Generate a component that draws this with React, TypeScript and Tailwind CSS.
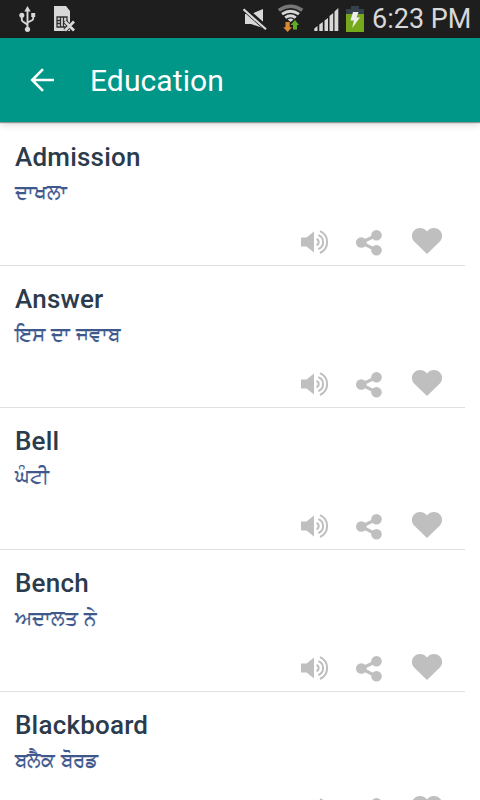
interface Word {
  id: string
  english: string
  punjabi: string
}

const words: Word[] = [
  { id: 'admission', english: 'Admission', punjabi: 'ਦਾਖਲਾ' },
  { id: 'answer', english: 'Answer', punjabi: 'ਇਸ ਦਾ ਜਵਾਬ' },
  { id: 'bell', english: 'Bell', punjabi: 'ਘੰਟੀ' },
  { id: 'bench', english: 'Bench', punjabi: 'ਅਦਾਲਤ ਨੇ' },
  { id: 'blackboard', english: 'Blackboard', punjabi: 'ਬਲੈਕ ਬੋਰਡ' },
]

export default function App() {
  return (
    <div className="flex h-[800px] w-[480px] flex-col overflow-hidden bg-white font-['Roboto','Noto_Sans',sans-serif]">
      <StatusBar />
      <header className="relative z-10 flex h-[84px] shrink-0 items-center bg-[#009688] pl-[30px] text-white shadow-[0_1px_1px_rgba(0,0,0,0.35),0_2px_8px_rgba(0,0,0,0.18)]">
        <svg className="h-6 w-6" viewBox="0 0 24 24" fill="none" stroke="currentColor" strokeWidth="2.6">
          <path d="M24 12H2.5M13 1.2 2.2 12 13 22.8" />
        </svg>
        <h1 className="pt-0.5 pl-9 text-[30px] leading-9 tracking-[0.1px]">Education</h1>
      </header>
      <main className="flex flex-col pt-0.5">
        {words.map((word) => (
          <WordRow key={word.id} word={word} />
        ))}
      </main>
    </div>
  )
}

function StatusBar() {
  return (
    <div className="flex h-[38px] shrink-0 items-center bg-[#1e1e1e] text-[#d8d8d8]">
      {/* USB */}
      <svg className="ml-[19px] h-[38px] w-[18px]" viewBox="0 0 18 38" fill="none" stroke="currentColor" strokeWidth="1.9">
        <path d="M8.5 30V9M2.8 16v4.2c0 2 5.7 3 5.7 5.4M14.2 16v2.7c0 2.4-5.7 2.4-5.7 4.8" />
        <path d="m8.5 6 3.2 5.5H5.3zM12.2 13h4v4h-4z" fill="currentColor" stroke="none" />
        <circle cx="2.8" cy="15.3" r="2.5" fill="currentColor" stroke="none" />
        <circle cx="8.5" cy="29.3" r="2.6" fill="currentColor" stroke="none" />
      </svg>
      {/* No SIM card */}
      <svg className="ml-4 h-[38px] w-[22px]" viewBox="0 0 22 38">
        <path d="M1 6h12l4 5v20H1z" fill="currentColor" />
        <path d="M4 17h10v10H4zM7.5 17v10M10.5 17v10M4 20.5h3.5M4 23.5h3.5M10.5 22H14" fill="none" stroke="#303030" strokeWidth="1.3" />
        <path d="m12 21.5 9 9m0-9-9 9" stroke="#1e1e1e" strokeWidth="4.5" />
        <path d="m12 21.5 9 9m0-9-9 9" stroke="currentColor" strokeWidth="2.8" />
      </svg>
      {/* Muted */}
      <svg className="ml-[168px] h-[38px] w-6" viewBox="0 0 24 38">
        <path d="M2 14h6l12-5v19L8 24H2z" fill="currentColor" />
        <path d="m0 7.5 23.5 21" stroke="#1e1e1e" strokeWidth="5.5" />
        <path d="m.5 9.3 22.5 20" stroke="currentColor" strokeWidth="2.2" />
      </svg>
      {/* Wi-Fi */}
      <svg className="ml-[11px] h-[38px] w-[26px]" viewBox="0 0 26 38" fill="none">
        <path d="M.8 10.3Q12.5 2.2 24.3 10.3" stroke="#777" strokeWidth="3.6" />
        <path d="M4 14.2q8.5-6 17 0M7.2 17.7q5.3-3.8 10.6 0" stroke="currentColor" strokeWidth="2.8" />
        <path d="M9.6 19.4q3-2 6 0L12.6 22z" fill="currentColor" />
        <path d="M7.5 22h4.2v5.2H14L9.6 32l-4.4-4.8h2.3z" fill="#dd8934" />
        <path d="m17 20 4 5h-2v4.5h-4V25h-2.5z" fill="#61aa2a" />
      </svg>
      {/* Signal strength */}
      <svg className="ml-2.5 h-[38px] w-[26px]" viewBox="0 0 26 38" fill="currentColor">
        <path d="M.3 31v-2.5L3.5 26v5zM5.3 31v-6.5L8.8 22v9zM10.5 31V20.5l3.5-2.5v13zM15.5 31V16l3.7-3v18zM20.5 31V11.5L24.3 8v23z" />
      </svg>
      {/* Battery */}
      <svg className="ml-1.5 h-[38px] w-[18px]" viewBox="0 0 18 38">
        <path d="M5 6h8v3h5v6H0V9h5z" fill="#36424b" />
        <path d="M0 14h18v18H0z" fill="#75a91c" />
        <path d="M7 12h5.5l-2 5.5H14L6.2 28l1.7-7.5H4.5z" fill="#eee" />
      </svg>
      <span className="ml-2 text-[27px] leading-[38px]">6:23 PM</span>
    </div>
  )
}

function WordRow({ word }: { word: Word }) {
  return (
    <section className="flex h-[142px] w-[465px] shrink-0 flex-col border-b border-[#dfdfdf] pl-[15px]">
      <h2 className="mt-[17px] text-[26px] leading-8 font-medium tracking-[0.2px] text-[#2b3b4c]">{word.english}</h2>
      <p className="mt-[3px] text-[20px] leading-8 whitespace-nowrap text-[#3e588e] [word-spacing:1px] [-webkit-text-stroke:0.25px_#3e588e]">
        {word.punjabi}
      </p>
      <div className="mt-5 flex items-start pl-[286px] text-[#bfbfbf]">
        {/* Speaker */}
        <svg className="mt-0.5 h-6 w-7" viewBox="0 0 28 24" fill="none" stroke="currentColor" strokeWidth="2">
          <path d="M0 7.5h5.5L13 1.5v21l-7.5-6H0z" fill="currentColor" stroke="none" />
          <path d="M15.5 9a3.3 3.3 0 0 1 0 6.2M17.3 5.1a7.5 7.5 0 0 1 0 14M19 1.2a11.9 11.9 0 0 1 0 21.8" />
        </svg>
        {/* Share */}
        <svg className="mt-0.5 ml-[27px] h-[26px] w-[26px]" viewBox="0 0 26 26" fill="currentColor">
          <path d="M20.5 5.3 5.3 12.5l15.2 7.8" fill="none" stroke="currentColor" strokeWidth="3.2" />
          <circle cx="5.3" cy="12.5" r="5.3" />
          <circle cx="20.5" cy="5.3" r="5.3" />
          <circle cx="20.5" cy="20.3" r="5.3" />
        </svg>
        {/* Favourite */}
        <svg className="ml-[30px] h-[26px] w-[30px]" viewBox="0 0 30 26" fill="currentColor">
          <path d="M15 26 2.4 13.7C-1 10.2-.8 5 2.4 2.2 5.8-.9 11.8-.7 15 3.6c3.2-4.3 9.2-4.5 12.6-1.4 3.2 2.8 3.4 8 0 11.5z" />
        </svg>
      </div>
    </section>
  )
}
